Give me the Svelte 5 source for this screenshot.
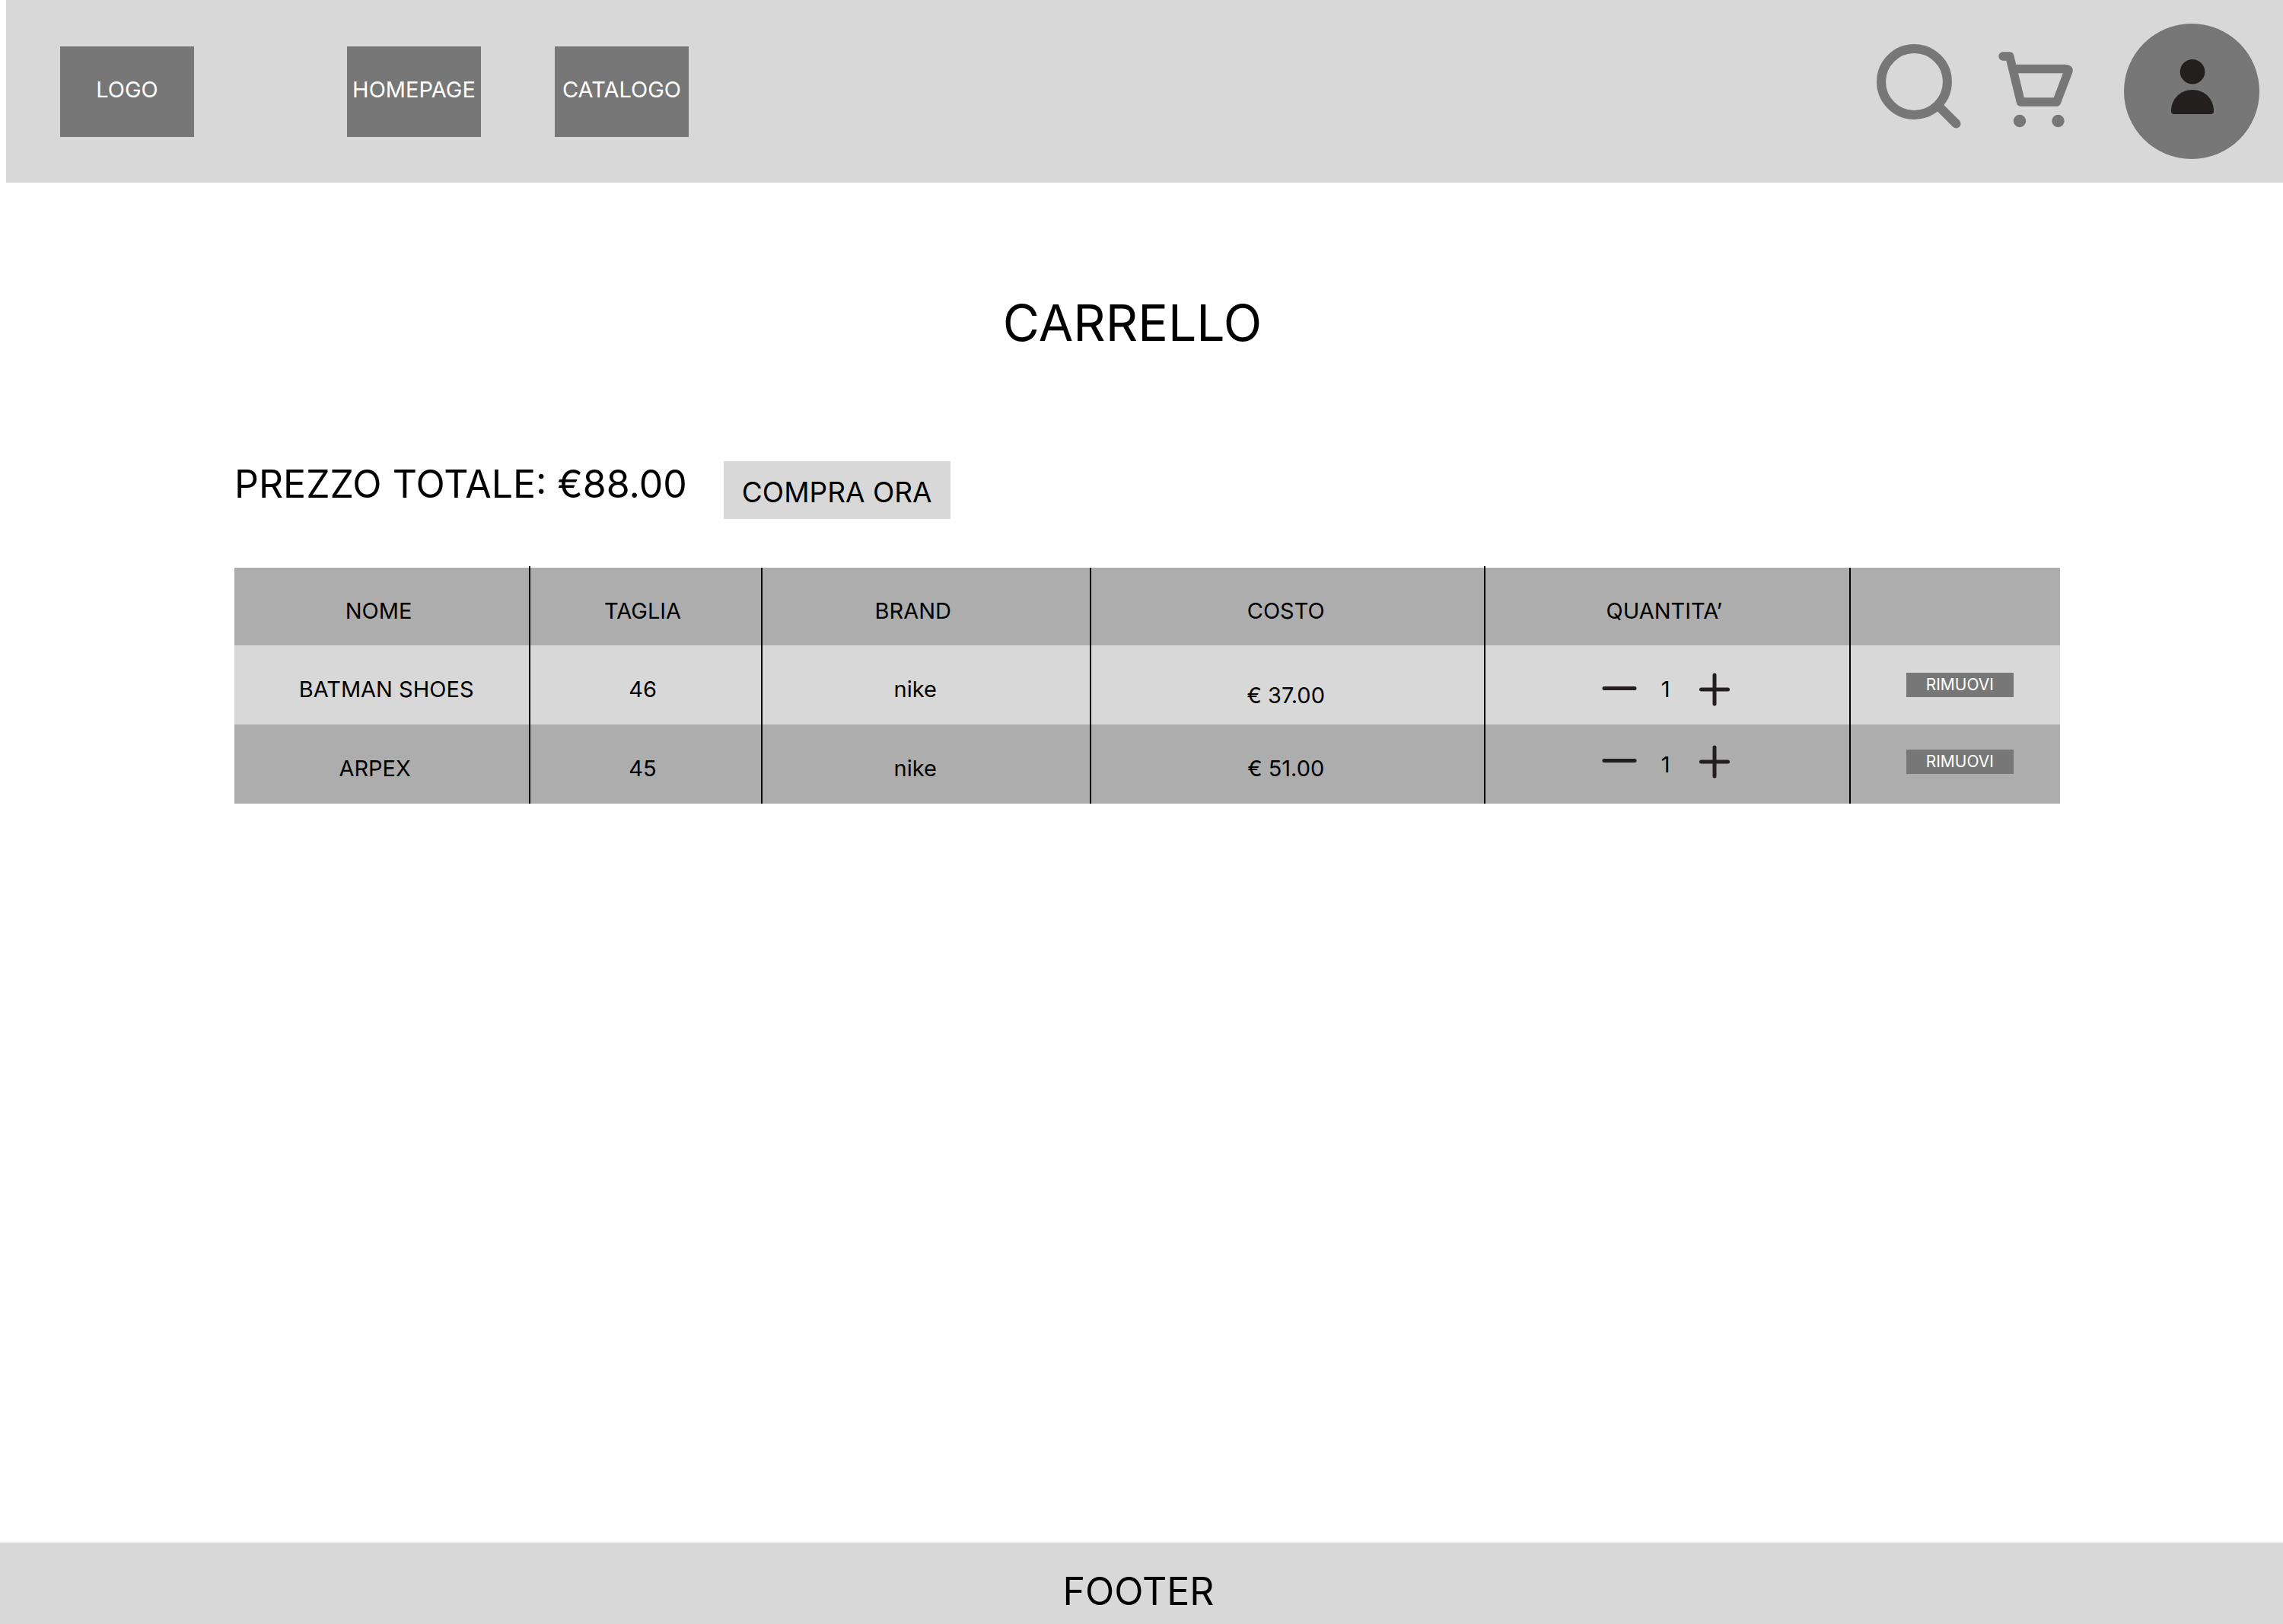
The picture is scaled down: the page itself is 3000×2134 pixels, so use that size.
<script>
  let items = $state([
    { id: 1, name: 'BATMAN SHOES', size: 46, brand: 'nike', price: 37, quantity: 1 },
    { id: 2, name: 'ARPEX', size: 45, brand: 'nike', price: 51, quantity: 1 }
  ]);

  let total = $derived(items.reduce((sum, item) => sum + item.price * item.quantity, 0));

  function change(item, step) {
    item.quantity = Math.max(1, item.quantity + step);
  }

  function remove(id) {
    items = items.filter((item) => item.id !== id);
  }
</script>

<div class="page">
  <header>
    <a class="box logo" href="#home">LOGO</a>
    <nav>
      <a class="box" href="#homepage">HOMEPAGE</a>
      <a class="box" href="#catalogo">CATALOGO</a>
    </nav>
    <div class="actions">
      <button class="icon search" aria-label="Cerca">
        <svg width="112" height="124" viewBox="0 0 112 124" fill="none" stroke="#777" stroke-width="12" stroke-linecap="round">
          <circle cx="50.500" cy="49.500" r="43.400" />
          <path d="M82 81L105.500 104.500" />
        </svg>
      </button>
      <button class="icon cart" aria-label="Carrello">
        <svg width="100" height="104" viewBox="0 0 100 104" fill="none" stroke="#777" stroke-width="11.4" stroke-linecap="round" stroke-linejoin="round">
          <path d="M7 6H15.8L30.4 66H77.6L92.6 26.5C94 23 91.500 22.500 88.500 22.500H20" />
          <circle cx="29" cy="91" r="8.200" fill="#777" stroke="none" />
          <circle cx="79.500" cy="91" r="8.200" fill="#777" stroke="none" />
        </svg>
      </button>
      <button class="icon" aria-label="Profilo">
        <svg width="178" height="178" viewBox="0 0 178 178">
          <circle cx="89" cy="89" r="89" fill="#777" />
          <circle cx="90" cy="63.300" r="16.300" fill="#231f1e" />
          <path d="M66 119Q62 119 62 115C62 99 74 87 90 87S118 99 118 115Q118 119 114 119Z" fill="#231f1e" />
        </svg>
      </button>
    </div>
  </header>

  <main>
    <h1>CARRELLO</h1>

    <section class="cart-content">
      <div class="summary">
        <p>PREZZO TOTALE: €{total.toFixed(2)}</p>
        <button class="buy">COMPRA ORA</button>
      </div>

      <table>
        <colgroup>
          <col class="col-name" />
          <col class="col-size" />
          <col class="col-brand" />
          <col class="col-cost" />
          <col class="col-quantity" />
          <col />
        </colgroup>
        <thead>
          <tr>
            <th class="name" scope="col">NOME</th>
            <th class="size tall" scope="col">TAGLIA</th>
            <th class="brand" scope="col">BRAND</th>
            <th class="cost" scope="col">COSTO</th>
            <th class="quantity tall" scope="col">QUANTITA’</th>
            <td></td>
          </tr>
        </thead>
        <tbody>
          {#each items as item (item.id)}
            <tr>
              <td class="name">{item.name}</td>
              <td class="size">{item.size}</td>
              <td class="brand">{item.brand}</td>
              <td class="cost">€ {item.price.toFixed(2)}</td>
              <td class="quantity">
                <div class="stepper">
                  <button class="icon" aria-label="Diminuisci quantità" onclick={() => change(item, -1)}>
                    <svg width="46" height="44" viewBox="0 0 46 44" stroke="#231f1e" stroke-width="5" stroke-linecap="round">
                      <path d="M3 20.500H43" />
                    </svg>
                  </button>
                  <output>{item.quantity}</output>
                  <button class="icon" aria-label="Aumenta quantità" onclick={() => change(item, 1)}>
                    <svg width="40" height="44" viewBox="0 0 40 44" stroke="#231f1e" stroke-width="5" stroke-linecap="round">
                      <path d="M2.500 22H37.500M20 3V41" />
                    </svg>
                  </button>
                </div>
              </td>
              <td class="action">
                <button class="remove" onclick={() => remove(item.id)}>RIMUOVI</button>
              </td>
            </tr>
          {/each}
        </tbody>
      </table>
    </section>
  </main>

  <footer>FOOTER</footer>
</div>

<style>
  :global(body) {
    margin: 0;
    background: #fff;
  }

  .page {
    display: flex;
    flex-direction: column;
    min-height: 100vh;
    color: #000;
    font-family: Inter, 'Liberation Sans', sans-serif;
    font-size: 29px;
    line-height: 36px;
  }

  button {
    border: 0;
    font: inherit;
    color: inherit;
    cursor: pointer;
  }

  .icon {
    display: block;
    padding: 0;
    background: none;
  }

  svg {
    display: block;
  }

  header {
    display: flex;
    align-items: center;
    box-sizing: border-box;
    height: 240px;
    margin-left: 8px;
    padding: 0 31px 0 71px;
    background: #d8d8d8;
  }

  .box {
    display: flex;
    align-items: center;
    justify-content: center;
    box-sizing: border-box;
    width: 176px;
    height: 119px;
    padding-bottom: 4px;
    background: #777;
    color: #fff;
    text-decoration: none;
  }

  .logo {
    margin-right: 201px;
  }

  nav {
    display: flex;
    gap: 97px;
  }

  .actions {
    display: flex;
    align-items: center;
    margin-left: auto;
  }

  .search {
    margin-right: 48px;
  }

  .cart {
    margin-right: 66px;
  }

  main {
    flex: 1;
  }

  h1 {
    margin: 0;
    padding: 144px 24px 142px 0;
    font-size: 66px;
    line-height: 80px;
    font-weight: 400;
    text-align: center;
  }

  .cart-content {
    padding: 0 293px 64px 308px;
  }

  .summary {
    display: flex;
    align-items: flex-start;
    gap: 48px;
    margin-bottom: 64px;
  }

  .summary p {
    margin: 0;
    font-size: 50px;
    line-height: 60px;
  }

  .buy {
    height: 76px;
    padding: 6px 24px 0;
    background: #d8d8d8;
    font-size: 37px;
  }

  table {
    width: 100%;
    table-layout: fixed;
    border-collapse: separate;
    border-spacing: 0;
    background: #adadad;
    text-align: center;
  }

  .col-name {
    width: 16.14%;
  }

  .col-size {
    width: 12.7%;
  }

  .col-brand {
    width: 18%;
  }

  .col-cost {
    width: 21.6%;
  }

  .col-quantity {
    width: 20%;
  }

  th,
  td {
    box-sizing: border-box;
    height: 104px;
    padding: 12px 0 0;
    font-weight: 400;
    vertical-align: middle;
  }

  thead th,
  thead td {
    height: 102px;
  }

  th + th,
  th + td,
  td + td {
    border-left: 2px solid #000;
  }

  .tall {
    position: relative;
  }

  .tall::before {
    content: '';
    position: absolute;
    top: -2px;
    left: -2px;
    width: 2px;
    height: 2px;
    background: #000;
  }

  th.name,
  .size,
  th.quantity {
    padding-right: 8px;
  }

  .brand {
    padding-right: 28px;
  }

  th.brand {
    padding-right: 34px;
  }

  .cost,
  .quantity {
    padding-right: 4px;
  }

  tbody tr:nth-child(odd) {
    background: #d8d8d8;
  }

  tbody tr:nth-child(odd) .name {
    padding-left: 12px;
  }

  tbody tr:nth-child(even) .name {
    padding-right: 18px;
  }

  tbody tr:nth-child(odd) .cost {
    padding-top: 28px;
  }

  .action {
    padding-top: 0;
    padding-left: 12px;
  }

  tbody tr:nth-child(even) .quantity,
  tbody tr:nth-child(even) .action {
    padding-top: 0;
    padding-bottom: 6px;
  }

  .stepper {
    display: flex;
    align-items: center;
    justify-content: center;
    gap: 22px;
  }

  output {
    box-sizing: border-box;
    width: 38px;
    padding-right: 6px;
  }

  tbody tr:nth-child(even) output {
    padding-top: 8px;
  }

  .remove {
    display: block;
    height: 32px;
    margin: 0 auto;
    padding: 0 26px;
    background: #777;
    color: #fff;
    font-size: 21px;
    line-height: 32px;
  }

  footer {
    padding: 34px 8px 13px 0;
    background: #d8d8d8;
    font-size: 50px;
    line-height: 60px;
    text-align: center;
  }
</style>
